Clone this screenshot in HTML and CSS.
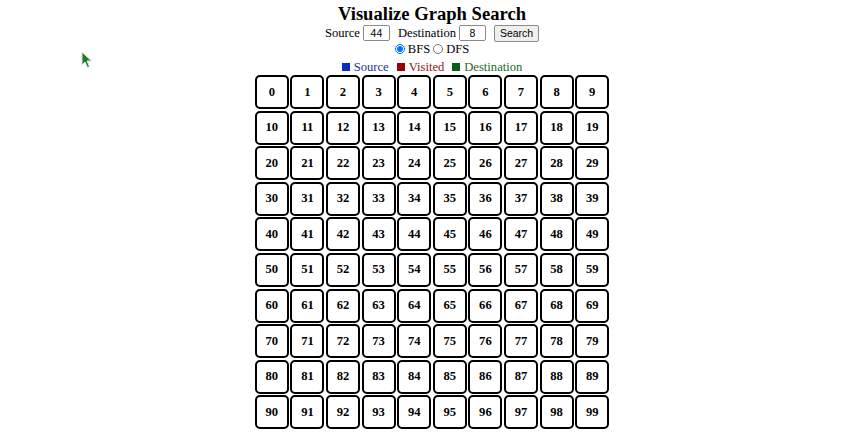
FILE: index.html
```
<!DOCTYPE html>
<html>
<head>
<meta charset="utf-8">
<link rel="stylesheet" href="styles.css">
</head>
<body>
<div class="page">
  <h1 class="title">Visualize Graph Search</h1>
  <div class="controls">
    <label class="lbl">Source <input class="num" type="text" value="44"></label>
    <label class="lbl">Destination <input class="num" type="text" value="8"></label>
    <button class="btn">Search</button>
  </div>
  <div class="algos">
    <label><input type="radio" name="a" checked>BFS</label>
    <label><input type="radio" name="a">DFS</label>
  </div>
  <div class="legend">
    <span class="key src"><i class="sq"></i>Source</span>
    <span class="key vis"><i class="sq"></i>Visited</span>
    <span class="key dst"><i class="sq"></i>Destination</span>
  </div>
  <div class="grid" id="grid">
    <div class="cell">0</div><div class="cell">1</div><div class="cell">2</div><div class="cell">3</div><div class="cell">4</div><div class="cell">5</div><div class="cell">6</div><div class="cell">7</div><div class="cell">8</div><div class="cell">9</div>
    <div class="cell">10</div><div class="cell">11</div><div class="cell">12</div><div class="cell">13</div><div class="cell">14</div><div class="cell">15</div><div class="cell">16</div><div class="cell">17</div><div class="cell">18</div><div class="cell">19</div>
    <div class="cell">20</div><div class="cell">21</div><div class="cell">22</div><div class="cell">23</div><div class="cell">24</div><div class="cell">25</div><div class="cell">26</div><div class="cell">27</div><div class="cell">28</div><div class="cell">29</div>
    <div class="cell">30</div><div class="cell">31</div><div class="cell">32</div><div class="cell">33</div><div class="cell">34</div><div class="cell">35</div><div class="cell">36</div><div class="cell">37</div><div class="cell">38</div><div class="cell">39</div>
    <div class="cell">40</div><div class="cell">41</div><div class="cell">42</div><div class="cell">43</div><div class="cell">44</div><div class="cell">45</div><div class="cell">46</div><div class="cell">47</div><div class="cell">48</div><div class="cell">49</div>
    <div class="cell">50</div><div class="cell">51</div><div class="cell">52</div><div class="cell">53</div><div class="cell">54</div><div class="cell">55</div><div class="cell">56</div><div class="cell">57</div><div class="cell">58</div><div class="cell">59</div>
    <div class="cell">60</div><div class="cell">61</div><div class="cell">62</div><div class="cell">63</div><div class="cell">64</div><div class="cell">65</div><div class="cell">66</div><div class="cell">67</div><div class="cell">68</div><div class="cell">69</div>
    <div class="cell">70</div><div class="cell">71</div><div class="cell">72</div><div class="cell">73</div><div class="cell">74</div><div class="cell">75</div><div class="cell">76</div><div class="cell">77</div><div class="cell">78</div><div class="cell">79</div>
    <div class="cell">80</div><div class="cell">81</div><div class="cell">82</div><div class="cell">83</div><div class="cell">84</div><div class="cell">85</div><div class="cell">86</div><div class="cell">87</div><div class="cell">88</div><div class="cell">89</div>
    <div class="cell">90</div><div class="cell">91</div><div class="cell">92</div><div class="cell">93</div><div class="cell">94</div><div class="cell">95</div><div class="cell">96</div><div class="cell">97</div><div class="cell">98</div><div class="cell">99</div>
  </div>
</div>
<svg class="cursor" width="12" height="18" viewBox="0 0 12 18"><path d="M1 1 L1 14 L4 11 L6.5 16.5 L8.5 15.5 L6 10 L10.5 10 Z" fill="#1f7a2a" stroke="#dfe8df" stroke-width="1"/></svg>
</body>
</html>
```
FILE: styles.css
```
html, body {
  margin: 0;
  padding: 0;
  background: #fff;
}
body {
  font-family: "Liberation Serif", "Times New Roman", serif;
  color: #000;
  overflow: hidden;
}
.page {
  display: flex;
  flex-direction: column;
  align-items: center;
  padding-top: 4px;
}
.title {
  margin: 0;
  font-size: 18.6px;
  line-height: 20px;
  height: 20px;
  font-weight: bold;
}
.controls {
  display: flex;
  align-items: center;
  gap: 8px;
  font-size: 12.6px;
  line-height: 18px;
  height: 18px;
  margin-top: 0;
}
.lbl {
  display: flex;
  align-items: center;
  gap: 3px;
}
.num {
  box-sizing: border-box;
  width: 27px;
  height: 16px;
  padding: 0 2px;
  margin: 0;
  border: 1px solid #8a8a8a;
  border-radius: 2px;
  font-family: "Liberation Sans", Arial, sans-serif;
  font-size: 10.5px;
  text-align: center;
}
.btn {
  box-sizing: border-box;
  width: 45px;
  height: 17px;
  padding: 0;
  margin: 0;
  font-family: "Liberation Sans", Arial, sans-serif;
  font-size: 10.5px;
  background: #efefef;
  border: 1px solid #8a8a8a;
  border-radius: 2px;
}
.algos {
  display: flex;
  align-items: center;
  font-size: 12.6px;
  line-height: 16px;
  height: 16px;
  gap: 3px;
  margin-top: -1px;
}
.algos label {
  display: flex;
  align-items: center;
}
.algos input {
  margin: 0 3px 0 0;
  width: 10px;
  height: 10px;
}
.legend {
  display: flex;
  gap: 8px;
  font-size: 12.6px;
  line-height: 14px;
  height: 14px;
  margin-top: 3px;
}
.key {
  display: flex;
  align-items: center;
  gap: 4px;
}
.sq {
  display: inline-block;
  width: 8px;
  height: 8px;
}
.src { color: #1c2ea6; }
.src .sq { background: #0a2bc8; }
.vis { color: #8e1a1a; }
.vis .sq { background: #9a0000; }
.dst { color: #1e6a2a; }
.dst .sq { background: #0b5e1a; }
.grid {
  display: grid;
  grid-template-columns: repeat(10, 34px);
  grid-auto-rows: 34px;
  gap: 1.6px;
  margin-top: 1px;
}
.cell {
  border: 2px solid #000;
  border-radius: 5px;
  display: flex;
  align-items: center;
  justify-content: center;
  font-weight: bold;
  font-size: 12.6px;
}
.cursor {
  position: absolute;
  left: 81px;
  top: 51px;
}
```
